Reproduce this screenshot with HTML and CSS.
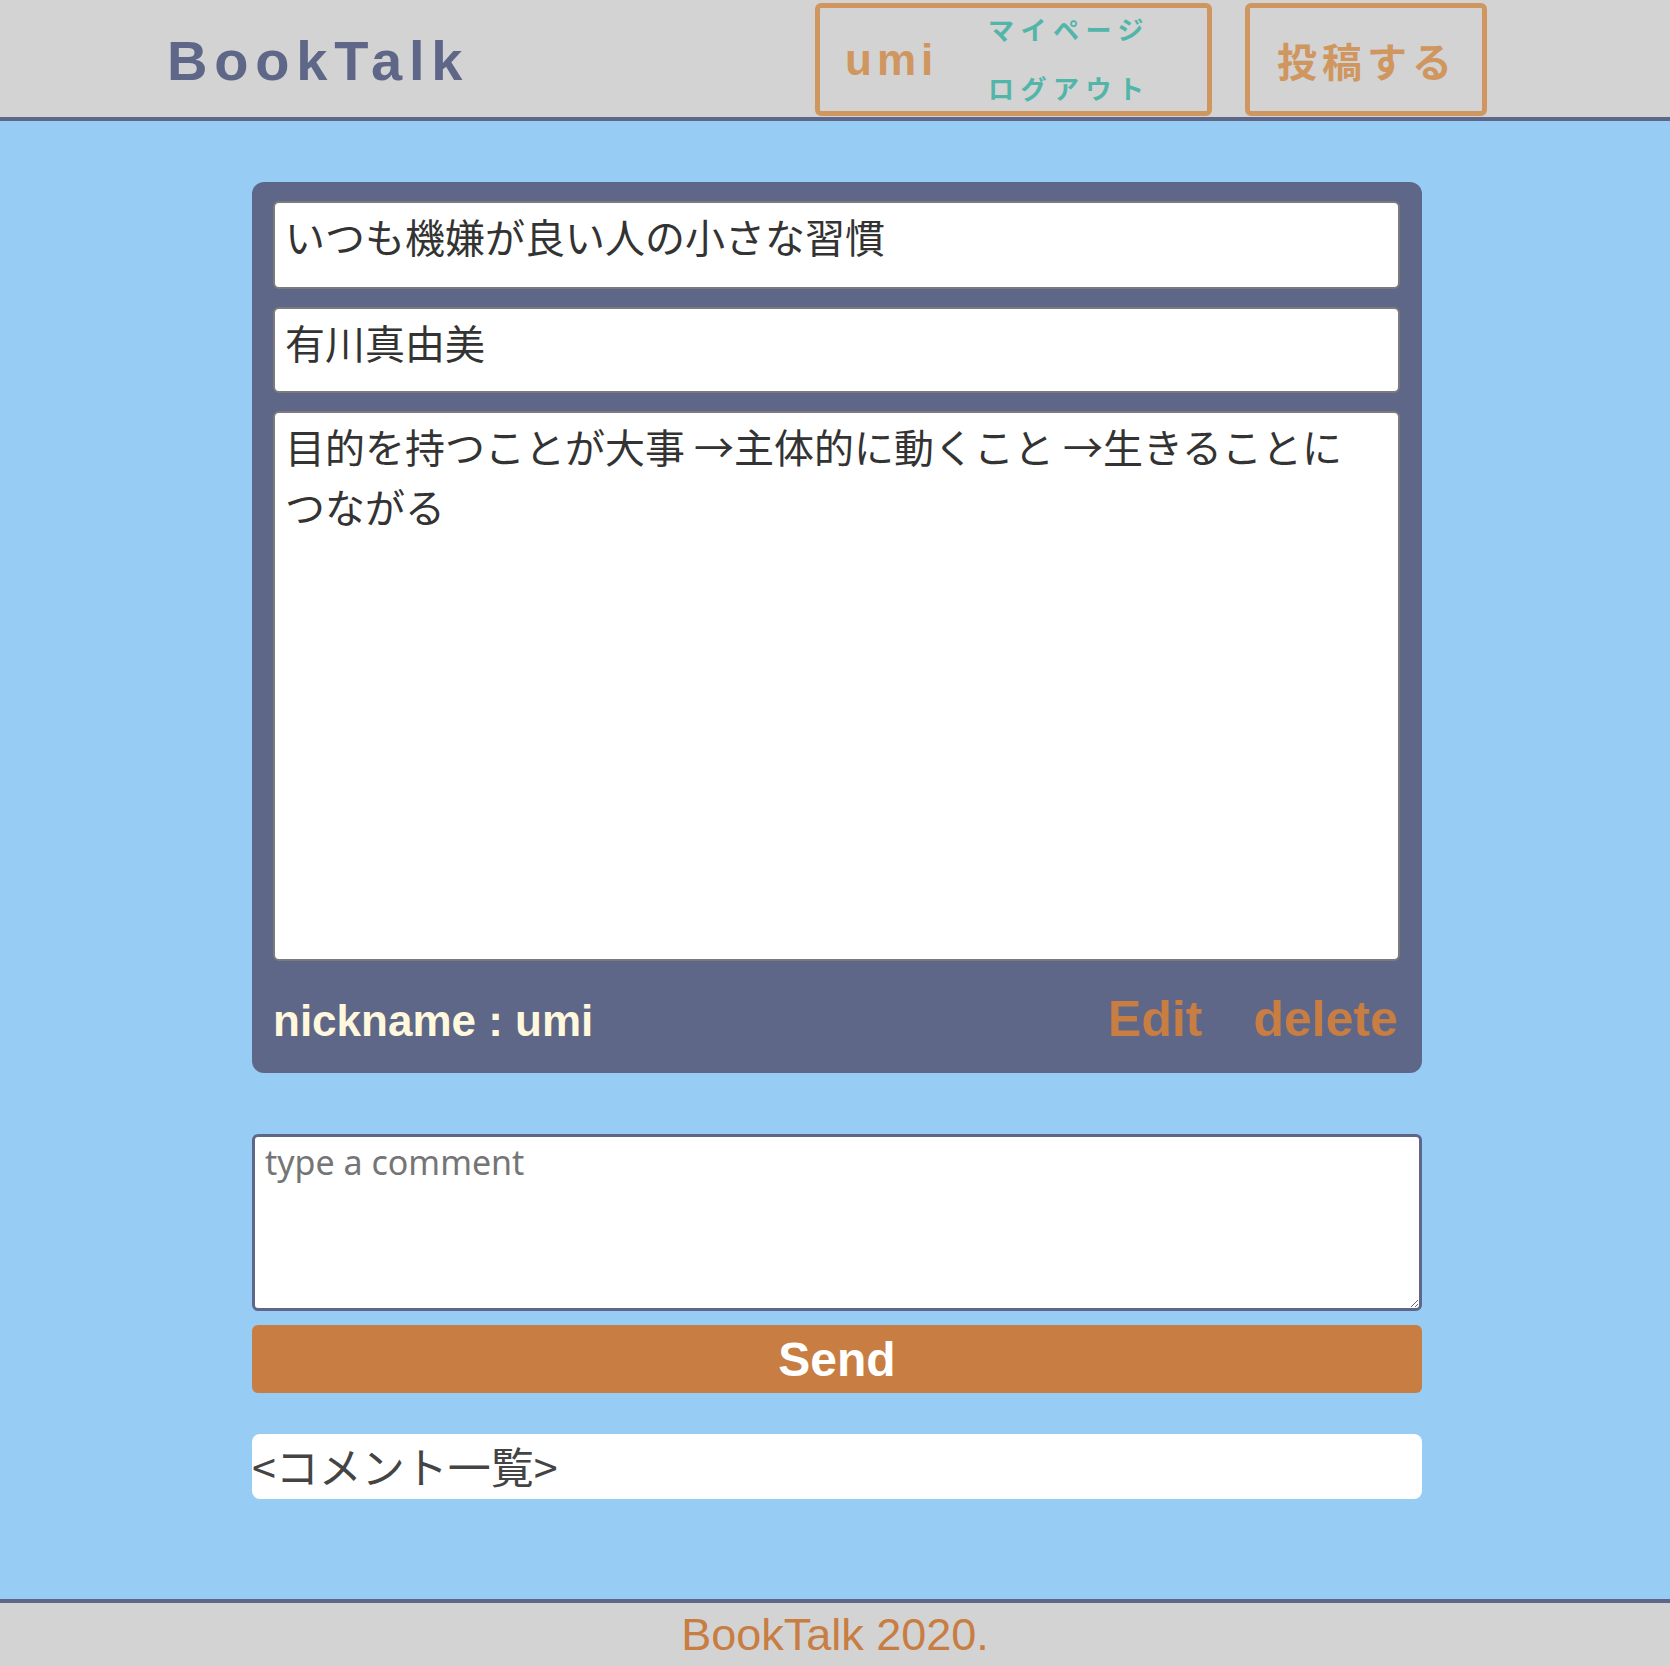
FILE: index.html
```html
<!DOCTYPE html>
<html lang="ja">
<head>
<meta charset="utf-8">
<title>BookTalk</title>
<link rel="stylesheet" href="styles.css">
</head>
<body>
<header class="site-header">
  <h1 class="logo">BookTalk</h1>
  <nav class="nav">
    <div class="user-box">
      <span class="user-name">umi</span>
      <div class="user-links">
        <a class="user-link" href="#">マイページ</a>
        <a class="user-link" href="#">ログアウト</a>
      </div>
    </div>
    <a class="post-btn" href="#">投稿する</a>
  </nav>
</header>
<main class="main">
  <div class="card">
    <div class="field field-title">いつも機嫌が良い人の小さな習慣</div>
    <div class="field field-author">有川真由美</div>
    <div class="field field-body">目的を持つことが大事 →主体的に動くこと →生きることにつながる</div>
    <div class="card-footer">
      <span class="nickname">nickname : umi</span>
      <div class="actions">
        <a class="action" href="#">Edit</a>
        <a class="action" href="#">delete</a>
      </div>
    </div>
  </div>
  <form class="comment-form">
    <textarea class="comment-input" placeholder="type a comment"></textarea>
    <button class="send-btn" type="button">Send</button>
  </form>
  <div class="comment-list">
    <h2 class="comment-title">&lt;コメント一覧&gt;</h2>
  </div>
</main>
<footer class="site-footer">BookTalk 2020.</footer>
</body>
</html>
```

FILE: styles.css
```css
* { box-sizing: border-box; }

body {
  margin: 0;
  background: #97cdf5;
  font-family: "Liberation Sans", "Noto Sans CJK JP", sans-serif;
}

a { text-decoration: none; }

.site-header {
  display: flex;
  align-items: flex-start;
  height: 121px;
  background: #d3d3d3;
  border-bottom: 4px solid #5e6787;
  padding: 0 183px 0 167px;
}

.logo {
  margin: 33px 0 0;
  font-size: 56px;
  line-height: 56px;
  font-weight: bold;
  letter-spacing: 6.8px;
  color: #5e6787;
}

.nav {
  margin-left: auto;
  margin-top: 3px;
  display: flex;
  gap: 33px;
}

.user-box {
  width: 397px;
  height: 113px;
  border: 5px solid #d0965f;
  border-radius: 6px;
  display: flex;
  align-items: center;
  padding-left: 25px;
}

.user-name {
  width: 143px;
  font-size: 44px;
  font-weight: bold;
  letter-spacing: 5px;
  color: #d0965f;
}

.user-links {
  display: flex;
  flex-direction: column;
  gap: 33px;
  margin-top: -3px;
}

.user-link {
  font-family: "Noto Sans CJK JP", sans-serif;
  font-size: 26px;
  line-height: 26px;
  font-weight: bold;
  letter-spacing: 6.5px;
  color: #52b5a9;
}

.post-btn {
  width: 242px;
  height: 113px;
  border: 5px solid #d0965f;
  border-radius: 6px;
  display: flex;
  align-items: center;
  justify-content: center;
  padding-left: 2px;
  font-family: "Noto Sans CJK JP", sans-serif;
  font-size: 40px;
  font-weight: bold;
  letter-spacing: 5px;
  color: #d0965f;
}

.main {
  padding: 61px 0 100px 4px;
}

.card {
  width: 1170px;
  margin: 0 auto;
  background: #5e6787;
  border-radius: 12px;
  padding: 19px 22px 28px 21px;
  display: flex;
  flex-direction: column;
  gap: 18px;
}

.field {
  background: #fff;
  border: 2px solid #7b7b7b;
  border-radius: 6px;
  padding: 3px 20px 6px 10px;
  font-family: "Noto Sans CJK JP", sans-serif;
  font-size: 40px;
  line-height: 60px;
  color: #333;
}

.field-title { height: 88px; }
.field-author { height: 86px; }
.field-body { height: 550px; }

.card-footer {
  display: flex;
  justify-content: space-between;
  align-items: baseline;
  margin-top: 15px;
  height: 51px;
  line-height: 50px;
}

.nickname {
  font-size: 44px;
  font-weight: bold;
  color: #fff8dc;
}

.actions {
  display: flex;
  gap: 51px;
  margin-right: 2px;
}

.action {
  font-size: 50px;
  font-weight: bold;
  color: #c87d42;
}

.comment-form {
  width: 1170px;
  margin: 61px auto 0;
}

.comment-input {
  display: block;
  width: 100%;
  height: 177px;
  margin: 0;
  border: 3px solid #5e6787;
  border-radius: 6px;
  padding: 2px 10px 8px;
  font-family: "Noto Sans", sans-serif;
  font-size: 34px;
  color: #333;
  background: #fff;
}

.comment-input::placeholder { color: #757575; }

.send-btn {
  display: block;
  width: 100%;
  height: 68px;
  margin-top: 14px;
  background: #c87d42;
  border: none;
  border-radius: 6px;
  color: #fff;
  font-family: "Liberation Sans", sans-serif;
  font-size: 48px;
  font-weight: bold;
}

.comment-list {
  width: 1170px;
  height: 65px;
  margin: 41px auto 0;
  background: #fff;
  border-radius: 8px;
}

.comment-title {
  margin: 0;
  font-family: "Noto Sans CJK JP", sans-serif;
  font-size: 43px;
  font-weight: normal;
  line-height: 63px;
  color: #444;
}

.site-footer {
  height: 67px;
  border-top: 4px solid #5e6787;
  background: #d3d3d3;
  text-align: center;
  font-size: 45px;
  line-height: 63px;
  color: #c87d42;
}
```
